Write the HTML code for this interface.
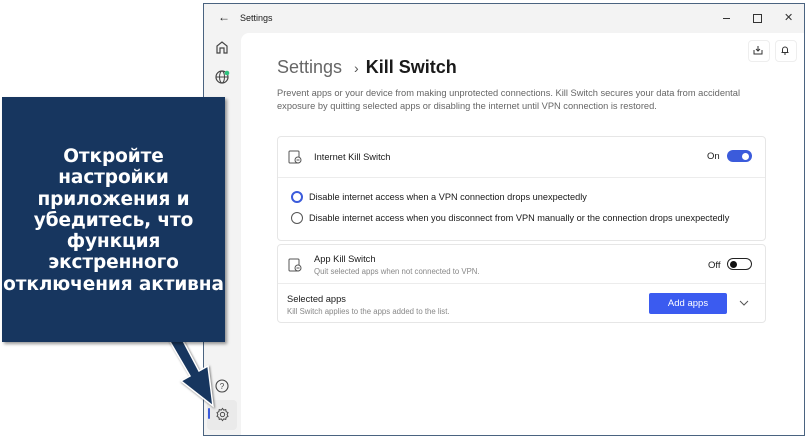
<!DOCTYPE html><html><head><meta charset="utf-8"><style>
body{margin:0;width:806px;height:438px;background:#fff;position:relative;overflow:hidden;font-family:"Liberation Sans",sans-serif;}
.win{position:absolute;left:203px;top:3px;width:600px;height:431px;border:1px solid #4a6380;background:#f3f3f3;}
.content{position:absolute;left:37px;top:29px;right:0;bottom:0;background:#fff;border-top-left-radius:8px;}
.t{position:absolute;white-space:nowrap;color:#1a1a1a;}
.card{position:absolute;left:36px;width:487px;background:#fff;border:1px solid #e6e6e6;border-radius:4px;}
.sep{position:absolute;left:0;right:0;height:1px;background:#ececec;}
.box{position:absolute;left:2px;top:97px;width:223px;height:245px;background:#17365f;box-shadow:2px 2px 3px rgba(0,0,0,.4);overflow:hidden;}
.box div{position:absolute;left:-10px;right:-10px;text-align:center;color:#fff;font-family:"DejaVu Sans",sans-serif;font-weight:bold;font-size:18.5px;line-height:21.3px;white-space:nowrap;letter-spacing:-.1px;}
</style></head><body>
<div class="win">
 <div class="t" style="left:14px;top:6px;font-size:12px;">←</div>
 <div class="t" style="left:36px;top:9px;font-size:9px;">Settings</div>
 <div style="position:absolute;left:519px;top:14px;width:7px;height:1px;background:#333"></div>
 <div style="position:absolute;left:549px;top:10px;width:7px;height:7px;border:1px solid #333"></div>
 <div class="t" style="left:580px;top:7px;font-size:11px;color:#333">✕</div>
 <svg style="position:absolute;left:10px;top:35px" width="16" height="16" viewBox="0 0 16 16"><path d="M3 14V7l5-4 5 4v7h-3V9H6v5z" fill="none" stroke="#444" stroke-width="1.2"/></svg>
 <svg style="position:absolute;left:10px;top:64px" width="18" height="18" viewBox="0 0 18 18"><circle cx="8" cy="9" r="6" fill="none" stroke="#444" stroke-width="1.2"/><ellipse cx="8" cy="9" rx="2.5" ry="6" fill="none" stroke="#444"/><path d="M2 9h12" stroke="#444"/><circle cx="13" cy="5" r="2.3" fill="#2ec27e"/></svg>
 <svg style="position:absolute;left:10px;top:374px" width="16" height="16" viewBox="0 0 16 16"><circle cx="8" cy="8" r="6" fill="none" stroke="#444" stroke-width="1.1"/><text x="8" y="11" font-size="8" text-anchor="middle" fill="#444" font-family="Liberation Sans">?</text></svg>
 <div style="position:absolute;left:3px;top:396px;width:30px;height:30px;background:#eaeaea;border-radius:4px"></div>
 <div style="position:absolute;left:4px;top:404px;width:2px;height:11px;background:#3b5bdb;border-radius:1px"></div>
 <svg style="position:absolute;left:11px;top:403px" width="15" height="15" viewBox="0 0 16 16"><circle cx="8" cy="8" r="2.3" fill="none" stroke="#444"/><path d="M8 1.5l1.3 1.8 2.2-.5.4 2.2 2 1-1 2 1 2-2 1-.4 2.2-2.2-.5L8 14.5l-1.3-1.8-2.2.5-.4-2.2-2-1 1-2-1-2 2-1 .4-2.2 2.2.5z" fill="none" stroke="#444" stroke-width="1"/></svg>
 <div class="content">
  <div style="position:absolute;left:507px;top:7px;width:20px;height:20px;border:1px solid #eee;border-radius:4px"></div>
  <svg style="position:absolute;left:512px;top:12px" width="10" height="10" viewBox="0 0 10 10"><path d="M5 1v5M3 4l2 2 2-2M1 5v4h8V5" fill="none" stroke="#333"/></svg>
  <div style="position:absolute;left:534px;top:7px;width:20px;height:20px;border:1px solid #eee;border-radius:4px"></div>
  <svg style="position:absolute;left:539px;top:12px" width="10" height="10" viewBox="0 0 10 10"><path d="M2.5 7.5V4.5a2.5 2.5 0 0 1 5 0v3zM1.5 7.5h7M4 9h2" fill="none" stroke="#333"/></svg>
  <div class="t" style="left:36px;top:24px;font-size:18px;color:#666">Settings <span style="font-size:14px;margin:0 7px;color:#555">›</span><span style="color:#1a1a1a;font-weight:bold">Kill Switch</span></div>
  <div class="t" style="left:36px;top:54px;font-size:9.3px;color:#666;line-height:13px">Prevent apps or your device from making unprotected connections. Kill Switch secures your data from accidental<br>exposure by quitting selected apps or disabling the internet until VPN connection is restored.</div>
  <div class="card" style="top:103px;height:103px">
   <svg style="position:absolute;left:10px;top:13px" width="15" height="15" viewBox="0 0 15 15"><rect x="1" y="1" width="10" height="12" rx="1" fill="none" stroke="#555"/><circle cx="10" cy="10" r="3" fill="#fff" stroke="#555"/><path d="M8.5 10h3" stroke="#555"/></svg>
   <div class="t" style="left:36px;top:15px;font-size:9.3px">Internet Kill Switch</div>
   <div class="t" style="left:429px;top:14px;font-size:9.5px">On</div>
   <div style="position:absolute;left:449px;top:13px;width:25px;height:12px;border-radius:7px;background:#3b5bdb"></div>
   <div style="position:absolute;left:464px;top:15.5px;width:7px;height:7px;border-radius:50%;background:#fff"></div>
   <div class="sep" style="top:40px"></div>
   <div style="position:absolute;left:13px;top:54px;width:8px;height:8px;border:2px solid #3b5bdb;border-radius:50%"></div>
   <div class="t" style="left:31px;top:55px;font-size:9.2px">Disable internet access when a VPN connection drops unexpectedly</div>
   <div style="position:absolute;left:13px;top:75px;width:10px;height:10px;border:1px solid #555;border-radius:50%"></div>
   <div class="t" style="left:31px;top:76px;font-size:9.2px">Disable internet access when you disconnect from VPN manually or the connection drops unexpectedly</div>
  </div>
  <div class="card" style="top:211px;height:77px">
   <svg style="position:absolute;left:10px;top:13px" width="15" height="15" viewBox="0 0 15 15"><rect x="1" y="1" width="10" height="12" rx="1" fill="none" stroke="#555"/><circle cx="10" cy="10" r="3" fill="#fff" stroke="#555"/><path d="M8.5 10h3" stroke="#555"/></svg>
   <div class="t" style="left:36px;top:9px;font-size:9.3px">App Kill Switch</div>
   <div class="t" style="left:36px;top:22px;font-size:7.8px;color:#888">Quit selected apps when not connected to VPN.</div>
   <div class="t" style="left:430px;top:15px;font-size:9.5px">Off</div>
   <div style="position:absolute;left:449px;top:13px;width:23px;height:10px;border-radius:7px;border:1px solid #222"></div>
   <div style="position:absolute;left:452px;top:16px;width:7px;height:7px;border-radius:50%;background:#111"></div>
   <div class="sep" style="top:38px"></div>
   <div class="t" style="left:9px;top:49px;font-size:9.3px">Selected apps</div>
   <div class="t" style="left:9px;top:62px;font-size:7.8px;color:#888">Kill Switch applies to the apps added to the list.</div>
   <div style="position:absolute;left:371px;top:48px;width:78px;height:21px;background:#3b5bf0;border-radius:2px;color:#fff;font-size:9.5px;text-align:center;line-height:21px">Add apps</div>
   <svg style="position:absolute;left:461px;top:55px" width="10" height="6" viewBox="0 0 10 6"><path d="M1 1l4 4 4-4" fill="none" stroke="#555"/></svg>
  </div>
 </div>
</div>
<svg style="position:absolute;left:0;top:0" width="806" height="438"><path d="M169 340 L190 376 L181 381 L213 406 L208 366 L199 371 L180 335 Z" fill="#17365f" stroke="#fff" stroke-width="1.5" filter="drop-shadow(1px 1px 1px rgba(0,0,0,.5))"/></svg>
<div class="box"><div style="top:49px">Откройте<br>настройки<br>приложения и<br>убедитесь, что<br>функция<br>экстренного<br>отключения активна</div></div>
</body></html>
